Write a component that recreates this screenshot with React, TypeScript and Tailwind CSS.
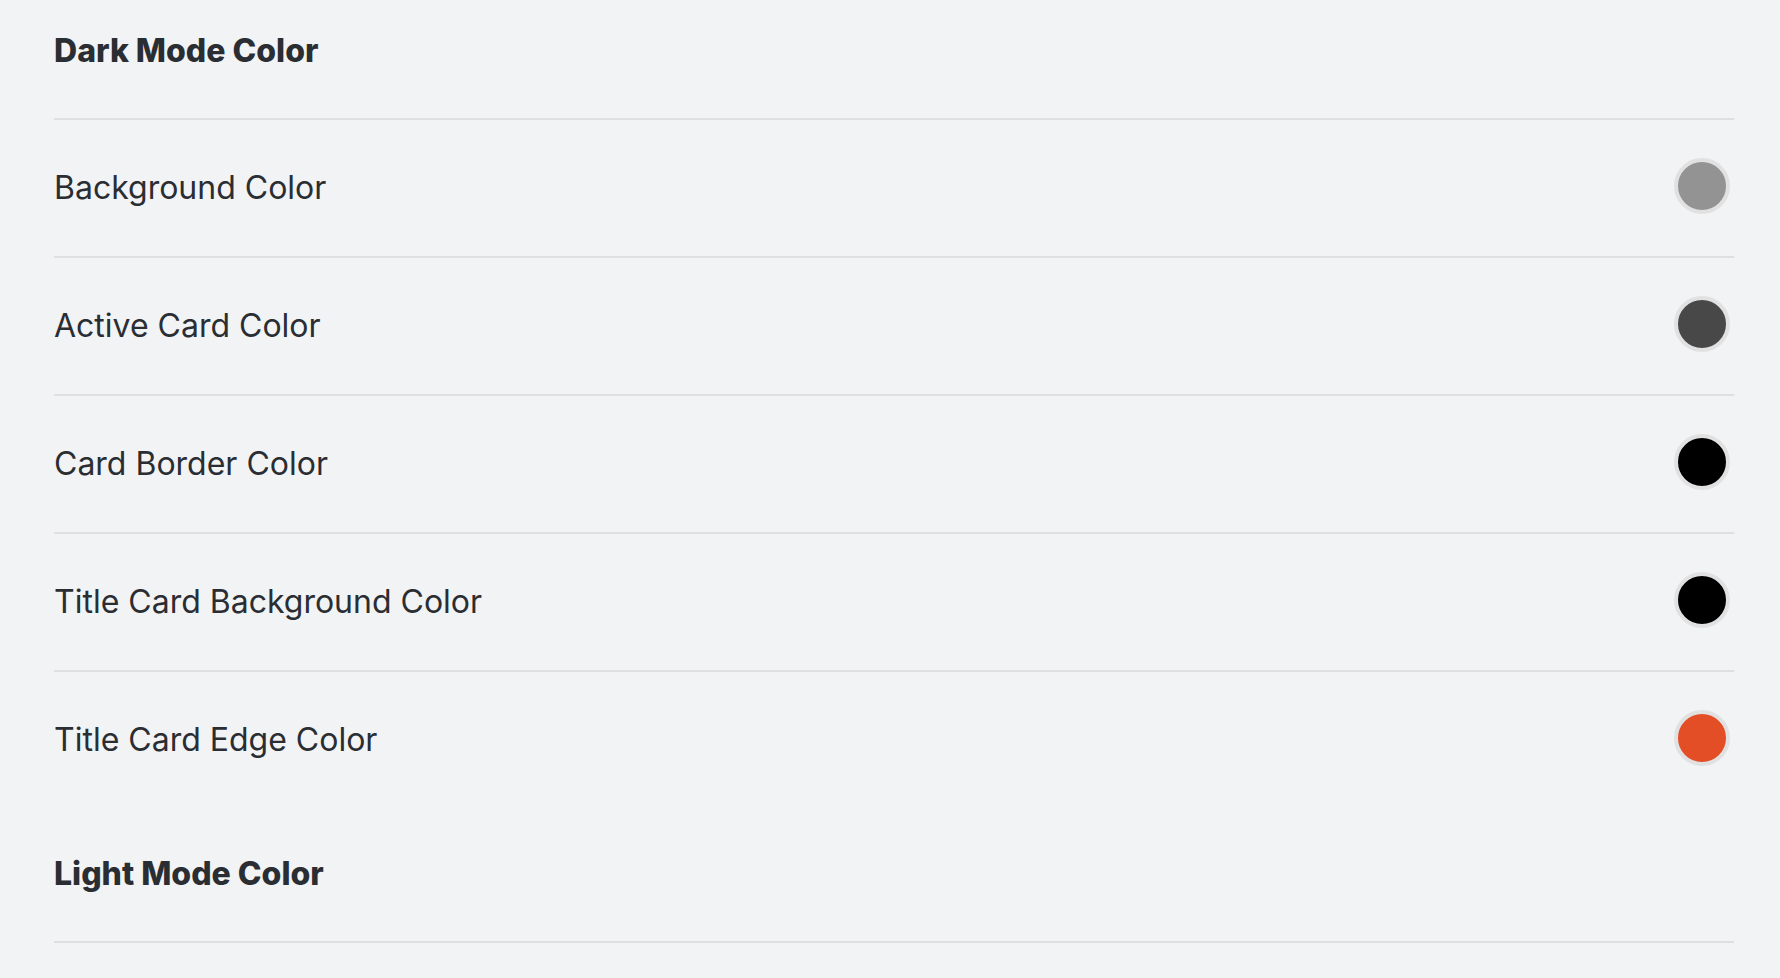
import React from "react";

const rows = [
  { label: "Background Color", color: "bg-[#939393]" },
  { label: "Active Card Color", color: "bg-[#484848]" },
  { label: "Card Border Color", color: "bg-[#000000]" },
  { label: "Title Card Background Color", color: "bg-[#000000]" },
  { label: "Title Card Edge Color", color: "bg-[#e34e26]" },
];

function Heading({ text }: { text: string }) {
  return (
    <div className="pt-[31px] pb-[47px] border-b-2 border-[#dedfe1]">
      <h2 className="text-[32px] leading-[40px] font-extrabold text-[#2a2e33]">{text}</h2>
    </div>
  );
}

export default function App() {
  return (
    <div
      className="min-h-[978px] w-full bg-[#f2f3f5] pl-[54px] pr-[46px] overflow-hidden"
      style={{ fontFamily: "Inter, 'Noto Sans', sans-serif" }}
    >
      <section>
        <Heading text="Dark Mode Color" />
        {rows.map((r, i) => (
          <div
            key={r.label}
            className={`flex items-center justify-between pr-[4px] ${
              i < rows.length - 1 ? "h-[138px] border-b-2 border-[#dedfe1]" : "h-[136px]"
            }`}
          >
            <span className="text-[32px] leading-[40px] text-[#2a2e33]">{r.label}</span>
            <span
              className={`block mb-[4px] w-[56px] h-[56px] rounded-full border-[4px] border-[#e1e1e2] ${r.color}`}
            />
          </div>
        ))}
      </section>
      <section className="mt-[15px]">
        <Heading text="Light Mode Color" />
      </section>
    </div>
  );
}
